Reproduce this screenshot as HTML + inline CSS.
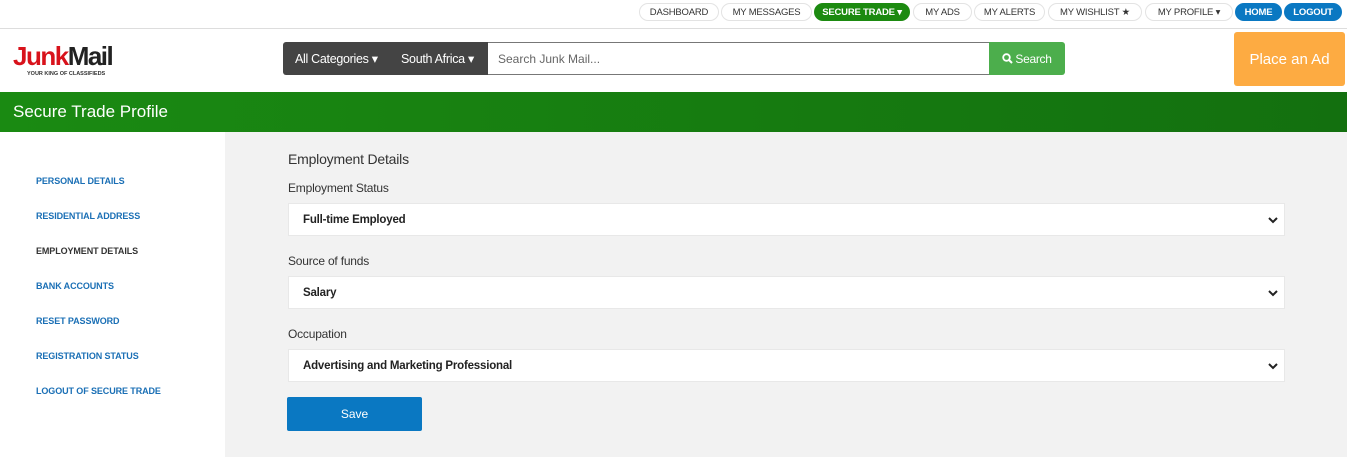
<!DOCTYPE html>
<html><head><style>
*{box-sizing:border-box;margin:0;padding:0}
body{width:1347px;height:457px;overflow:hidden;font-family:"Liberation Sans",Arial,sans-serif;background:#fff;position:relative}
.pill{position:absolute;top:3px;height:18px;border:1px solid #e3e3e3;border-radius:9px;font-size:9.5px;color:#333;display:flex;align-items:center;justify-content:center;background:#fff;letter-spacing:-.2px;white-space:nowrap}
.topline{position:absolute;top:28px;left:0;width:1347px;height:1px;background:#ddd}
.abs{position:absolute;white-space:nowrap}
.side a{position:absolute;left:36px;font-size:9px;font-weight:bold;color:#1a6fb5;text-decoration:none;letter-spacing:-.1px}
.lbl{position:absolute;left:288px;font-size:12px;color:#333;letter-spacing:-.2px}
.sel{position:absolute;left:288px;width:997px;height:33px;background:#fff;border:1px solid #e8e8e8;font-size:11.5px;font-weight:bold;color:#222;padding-left:14px;display:flex;align-items:center;letter-spacing:-.2px}
.sel svg{position:absolute;right:6px;top:12px}
</style></head><body>
<div class="pill" style="left:639px;width:80px">DASHBOARD</div>
<div class="pill" style="left:721px;width:91px">MY MESSAGES</div>
<div class="pill" style="left:814px;width:96px;background:#1c8a10;border-color:#1c8a10;color:#fff;font-weight:bold">SECURE TRADE ▾</div>
<div class="pill" style="left:913px;width:59px">MY ADS</div>
<div class="pill" style="left:974px;width:71px">MY ALERTS</div>
<div class="pill" style="left:1048px;width:94px">MY WISHLIST ★</div>
<div class="pill" style="left:1145px;width:88px">MY PROFILE ▾</div>
<div class="pill" style="left:1235px;width:47px;background:#0a78c2;border-color:#0a78c2;color:#fff;font-weight:bold">HOME</div>
<div class="pill" style="left:1284px;width:58px;background:#0a78c2;border-color:#0a78c2;color:#fff;font-weight:bold">LOGOUT</div>
<div class="topline"></div>
<div class="abs" style="left:13px;top:42px;font-size:26px;font-weight:bold;letter-spacing:-1.5px;line-height:28px"><span style="color:#d8121b">Junk</span><span style="color:#222">Mail</span></div>
<div class="abs" style="left:27px;top:71px;font-size:5.5px;font-weight:bold;color:#333">YOUR KING OF CLASSIFIEDS</div>
<div class="abs" style="left:283px;top:42px;width:205px;height:33px;background:#444;border-radius:3px 0 0 3px;color:#fff;font-size:12.5px;display:flex;align-items:center;letter-spacing:-.3px"><span style="position:absolute;left:12px">All Categories ▾</span><span style="position:absolute;left:118px">South Africa ▾</span></div>
<div class="abs" style="left:488px;top:42px;width:502px;height:33px;border:1px solid #777;border-left:none;font-size:12px;color:#666;padding-left:10px;display:flex;align-items:center">Search Junk Mail...</div>
<div class="abs" style="left:989px;top:42px;width:76px;height:33px;background:#4cae4c;border-radius:0 3px 3px 0;color:#fff;font-size:12px;display:flex;align-items:center;justify-content:center;letter-spacing:-.3px"><svg width="11" height="11" style="margin-right:2px"><circle cx="4.5" cy="4.5" r="3.3" stroke="#fff" stroke-width="1.8" fill="none"/><path d="M7 7l3 3" stroke="#fff" stroke-width="2"/></svg>Search</div>
<div class="abs" style="left:1234px;top:32px;width:111px;height:54px;background:#fdab42;border-radius:3px;color:#fff;font-size:15px;display:flex;align-items:center;justify-content:center">Place an Ad</div>
<div class="abs" style="left:0;top:92px;width:1347px;height:40px;background:linear-gradient(90deg,#1a8a12,#13700f);color:#fff;font-size:17px;padding-left:13px;display:flex;align-items:center">Secure Trade Profile</div>
<div class="abs" style="left:225px;top:132px;width:1122px;height:325px;background:#f2f2f2"></div>
<div class="side">
<a style="top:176px">PERSONAL DETAILS</a>
<a style="top:211px">RESIDENTIAL ADDRESS</a>
<a style="top:246px;color:#333">EMPLOYMENT DETAILS</a>
<a style="top:281px">BANK ACCOUNTS</a>
<a style="top:316px">RESET PASSWORD</a>
<a style="top:351px">REGISTRATION STATUS</a>
<a style="top:386px">LOGOUT OF SECURE TRADE</a>
</div>
<div class="abs" style="left:288px;top:151px;font-size:14px;color:#333;letter-spacing:-.2px">Employment Details</div>
<div class="lbl" style="top:181px">Employment Status</div>
<div class="sel" style="top:203px">Full-time Employed<svg width="10" height="8"><path d="M1 2l4 4 4-4" stroke="#222" stroke-width="2" fill="none"/></svg></div>
<div class="lbl" style="top:254px">Source of funds</div>
<div class="sel" style="top:276px">Salary<svg width="10" height="8"><path d="M1 2l4 4 4-4" stroke="#222" stroke-width="2" fill="none"/></svg></div>
<div class="lbl" style="top:327px">Occupation</div>
<div class="sel" style="top:349px">Advertising and Marketing Professional<svg width="10" height="8"><path d="M1 2l4 4 4-4" stroke="#222" stroke-width="2" fill="none"/></svg></div>
<div class="abs" style="left:287px;top:397px;width:135px;height:34px;background:#0a78c2;border-radius:2px;color:#fff;font-size:12px;display:flex;align-items:center;justify-content:center">Save</div>
</body></html>
